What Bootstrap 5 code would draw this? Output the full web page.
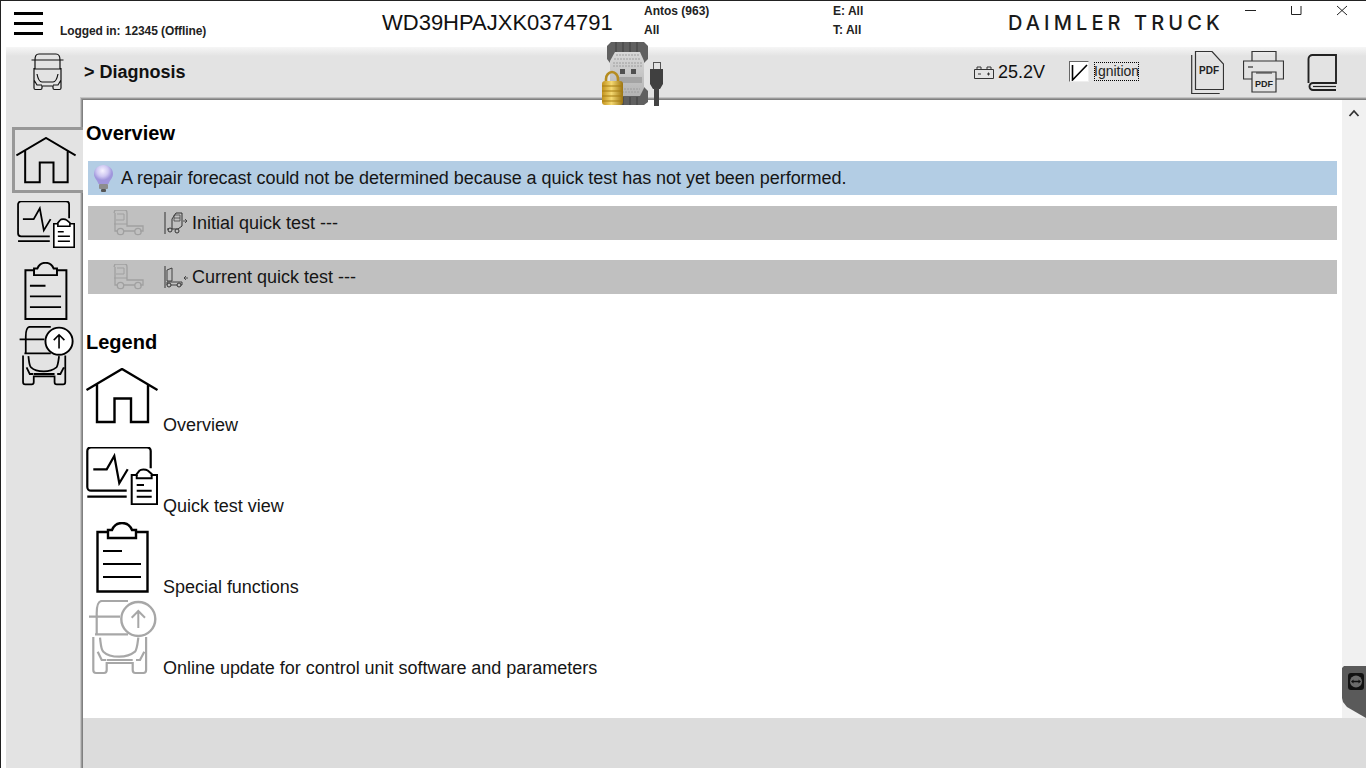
<!DOCTYPE html>
<html lang="en">
<head>
<meta charset="utf-8">
<link href="https://cdn.jsdelivr.net/npm/bootstrap@5.3.0/dist/css/bootstrap.min.css" rel="stylesheet">
<style>
html,body{height:100%;overflow:hidden}
body{font-family:"Liberation Sans",Arial,sans-serif;color:#000;background:#fff}
.win{height:768px;border-top:1px solid #222;border-left:1px solid #222}
.hdr{height:46px;flex:none}
.burger{width:29px;margin:11px 0 0 13px;height:23px;border-top:3px solid #000;border-bottom:3px solid #000;position:relative;flex:none}
.burger::after{content:"";position:absolute;left:0;right:0;top:7px;height:3px;background:#000}
.login{margin:21px 0 0 17px;width:322px;font-size:12px;font-weight:700;color:#222;flex:none;letter-spacing:-.08px}
.login span{margin-left:1px}
.vin{width:262px;font-size:22px;line-height:1;margin-top:11px;color:#111;flex:none}
.info{font-size:12px;font-weight:700;line-height:19px;margin-top:1px;color:#222;flex:none}
.info1{width:189px}
.info2{width:175px}
.brand{width:219px;flex:none;font-family:Inter,"Liberation Sans",sans-serif;font-size:20px;font-weight:500;letter-spacing:4.1px;white-space:nowrap;color:#1a1a1a;margin-top:10px;line-height:24px}
.wctl{padding-right:1px;flex:none}
.wbtn{width:46px;height:16px;display:flex;justify-content:center}
.stage{background:#e3e3e3;margin-left:5px;flex:1;min-height:0}
.tbar{height:50px;background:linear-gradient(#f6f6f6,#e3e3e3 9px);flex:none}
.truck{margin-left:25px;flex:none}
.crumbs{font-size:18px;font-weight:700;margin-left:20px;width:580px;color:#111;flex:none}
.bat{font-size:18px;color:#111;margin-left:310px;width:95px;flex:none;gap:4px}
.ign{font-size:14px;color:#222;width:122px;flex:none;margin-bottom:2px}
.ignbox{width:20px;height:21px;background:#fff;border:1px solid #eee;border-top-color:#666;border-left-color:#666;margin-right:5px}
.ignlab{outline:1px dotted #000;outline-offset:-1px;line-height:19px;width:45px}
.pr{margin-left:19px}
.bk{margin-left:23px}
.side{width:74px;flex:none;padding-top:30px;position:relative;z-index:2}
.tab-on{height:66px;width:71px;margin-left:6px;background:#e3e3e3;border:3px solid #989898;border-right:0;display:flex;align-items:center;padding-left:1px}
.s1{display:block;margin:8px 0 0 11px}
.s2{display:block;margin:14px 0 0 10px}
.s3{display:block;margin:5px 0 0 11px}
.rcol{min-width:0;margin:3px 0 0 3px;box-shadow:0 0 0 1px #808080,0 0 0 2px #9a9a9a,0 0 0 3px #c4c4c4}
.pane{flex:1;min-height:0;background:#fff}
.cont{padding:0 5px 0 3px;min-width:0}
.ttl{font-size:20px;font-weight:700;line-height:24px;margin:21px 0 0;color:#000}
.rowline{margin:16px 0 0 2px;height:34px;display:flex;align-items:center;font-size:18px;color:#151515;white-space:nowrap}
.tip{background:#b3cde4;letter-spacing:-.033px}
.grey1{background:#c0c0c0;margin-top:11px}
.grey2{background:#c0c0c0;margin-top:20px}
.ttl2{margin-top:36px}
.legs{margin-top:6px}
.leg{height:81px;display:flex;font-size:18px;color:#151515;letter-spacing:-.02px}
.leg svg{flex:none;margin-right:5px}
.leg span{line-height:21px;align-self:flex-end;margin-bottom:5px}
.m8{margin-top:8px}
.m6{margin-top:6px}
.mn3{margin-top:-3px}
.sb{width:24px;flex:none;background:#f1f1f1;display:flex;justify-content:center;padding-top:9px}
.foot{height:50px;flex:none;background:#dcdcdc;position:relative}
.device{position:absolute;left:600px;top:40px}
.tv{position:absolute;right:0;top:665px;width:24px;height:52px;background:#5a5a5a;clip-path:polygon(2px 0,100% 0,100% 100%,5px 41px,1px 36px,0 32px,0 2px);padding:7px 0 0 6px}
.bulb{margin:0 8px 0 6px;flex:none}
.t1{margin-left:25px;flex:none}
.t2{margin:0 4px 0 19px;flex:none}
</style>
</head>
<body>
<div class="win d-flex flex-column position-relative">
  <div class="hdr d-flex">
    <div class="burger"></div>
    <div class="login">Logged in: <span>12345 (Offline)</span></div>
    <div class="vin">WD39HPAJXK0374791</div>
    <div class="info info1"><div>Antos (963)</div><div>All</div></div>
    <div class="info info2"><div>E: All</div><div>T: All</div></div>
    <div class="brand">DAIMLER TRUCK</div>
    <div class="wctl d-flex">
      <div class="wbtn"><svg width="12" height="16"><path d="M1 9.500h11" stroke="#222" fill="none"/></svg></div>
      <div class="wbtn"><svg width="12" height="16"><path d="M1.500 5v8.500h9.500V5" stroke="#222" fill="none"/></svg></div>
      <div class="wbtn"><svg width="12" height="16"><path d="M1 5l10 9M11 5L1 14" stroke="#222" fill="none"/></svg></div>
    </div>
  </div>
  <div class="stage d-flex flex-column">
    <div class="tbar d-flex align-items-center">
      <svg class="truck" width="33" height="38" viewBox="0 0 33 38"><path d="M.5 7h32M4 7c0-4 1-6 4-6h17c3 0 4 2 4 6v9H4zM3 15v20c0 1 .5 1.500 1.500 1.500h5c1 0 1.500-.5 1.500-1.500v-2h11v2c0 1 .5 1.500 1.500 1.500h5c1 0 1.500-.5 1.500-1.500V15M6 21c1 5 3 8 5 8h11c2 0 4-3 5-8M3 27l3 5h5M30 27l-3 5h-5" fill="none" stroke="#111" stroke-width="1.200"/></svg>
      <div class="crumbs">&gt; Diagnosis</div>
      <div class="bat d-flex align-items-center">
        <svg width="20" height="13" viewBox="0 0 20 13"><path d="M3 3V1h4v2M13 3V1h4v2M.500 3.500h19v9H.500z" fill="none" stroke="#333"/><path d="M4 8h3M13 8h3M14.500 6.500v3" stroke="#333"/></svg>
        <span>25.2V</span>
      </div>
      <div class="ign d-flex align-items-center">
        <div class="ignbox"><svg class="d-block" width="18" height="19"><path d="M2.500 3v15L17 3" stroke="#000" stroke-width="1.600" fill="none"/></svg></div>
        <span class="ignlab">Ignition</span>
      </div>
      <svg width="33" height="43" viewBox="0 0 33 43"><path d="M4.500.5H21L32.500 13v25.500h-28zM.7 4v38.500h28" fill="none" stroke="#333" stroke-width="1.200"/><text x="18" y="23" text-anchor="middle" font-family="Liberation Sans" font-weight="700" font-size="10" fill="#222">PDF</text></svg>
      <svg class="pr" width="41" height="42" viewBox="0 0 41 42"><path d="M9 10V.5h24V10M9 28H.5V10h40v18H33" fill="none" stroke="#333" stroke-width="1.200"/><path d="M9 41V21h24v20z" fill="#e3e3e3" stroke="#333" stroke-width="1.200"/><path d="M13 22h16" stroke="#333"/><path d="M5 16h5" stroke="#777" stroke-width="2"/><text x="21" y="36" text-anchor="middle" font-family="Liberation Sans" font-weight="700" font-size="9" fill="#222">PDF</text></svg>
      <svg class="bk" width="30" height="37" viewBox="0 0 30 37"><path d="M1.500 29V5a4 4 0 0 1 4-4H29v28H6a3.500 3.500 0 0 0 0 7h23" fill="none" stroke="#222" stroke-width="1.900"/><path d="M6 32.500h23" stroke="#222" stroke-width="1.200"/></svg>
    </div>
    <div class="d-flex flex-grow-1 overflow-hidden">
      <div class="side">
        <div class="tab-on"><svg width="60" height="47" viewBox="0 0 72 56"><use href="#i-home"/></svg></div>
        <svg class="s1" width="58" height="47" viewBox="0 0 72 58"><use href="#i-quick"/></svg>
        <svg class="s2" width="59" height="59" viewBox="0 0 72 72"><use href="#i-clip"/></svg>
        <svg class="s3" width="58" height="60" viewBox="0 0 72 75"><use href="#i-update"/></svg>
      </div>
      <div class="rcol d-flex flex-column flex-grow-1">
        <div class="pane d-flex">
          <div class="cont flex-grow-1">
            <div class="ttl">Overview</div>
            <div class="rowline tip"><svg class="bulb" width="19" height="27" viewBox="0 0 19 27"><defs><radialGradient id="bulbg" cx=".45" cy=".3"><stop offset="0" stop-color="#f6f3ff"/><stop offset=".6" stop-color="#cfc8f2"/><stop offset="1" stop-color="#a096dc"/></radialGradient></defs><path d="M9.500 0C14.500 0 19 3.500 19 9c0 4-3.500 6.500-4.500 10h-10C3.500 15.500 0 13 0 9 0 3.500 4.500 0 9.500 0z" fill="url(#bulbg)"/><rect x="5" y="19" width="9" height="5" rx="1" fill="#8d8d8d"/><rect x="7" y="24" width="5" height="3" rx="1" fill="#555"/></svg><span>A repair forecast could not be determined because a quick test has not yet been performed.</span></div>
            <div class="rowline grey1"><svg class="t1" width="32" height="26" viewBox="0 0 32 26"><use href="#i-tr-side"/></svg><svg class="t2" width="24" height="24" viewBox="0 0 24 24"><path d="M1 1v22" stroke="#333"/><path d="M3 18h2M8 18h6l4-3V2h-6L8 8z" fill="none" stroke="#333"/><path d="M10 4h6v6h-6zM10 7h6" fill="none" stroke="#444" stroke-width=".8"/><circle cx="6" cy="19" r="2" fill="none" stroke="#333"/><circle cx="13" cy="20" r="2" fill="#c0c0c0" stroke="#333"/><path d="M19 10h4m-2-2l2 2-2 2" fill="none" stroke="#333" stroke-width=".8"/></svg><span>Initial quick test ---</span></div>
            <div class="rowline grey2"><svg class="t1" width="32" height="26" viewBox="0 0 32 26"><use href="#i-tr-side"/></svg><svg class="t2" width="24" height="24" viewBox="0 0 24 24"><path d="M1 1v22" stroke="#333"/><path d="M3 5l5-2v13M3 5v11h5M3 17h15v3H3z" fill="none" stroke="#333" stroke-width=".9"/><circle cx="5" cy="20" r="2" fill="#c0c0c0" stroke="#333"/><circle cx="15" cy="20" r="2" fill="#c0c0c0" stroke="#333"/><path d="M24 13h-4m2-2l-2 2 2 2" fill="none" stroke="#333" stroke-width=".8"/></svg><span>Current quick test ---</span></div>
            <div class="ttl ttl2">Legend</div>
            <div class="legs">
              <div class="leg"><svg class="m8" width="72" height="56" viewBox="0 0 72 56"><use href="#i-home"/></svg><span>Overview</span></div>
              <div class="leg"><svg class="m6" width="72" height="58" viewBox="0 0 72 58"><use href="#i-quick"/></svg><span>Quick test view</span></div>
              <div class="leg"><svg width="72" height="72" viewBox="0 0 72 72"><use href="#i-clip"/></svg><span>Special functions</span></div>
              <div class="leg"><svg class="mn3" width="72" height="75" viewBox="0 0 72 75"><g opacity=".34"><use href="#i-update"/></g></svg><span>Online update for control unit software and parameters</span></div>
            </div>
          </div>
          <div class="sb"><svg width="12" height="8"><path d="M1.500 7L6 2l4.500 5" fill="none" stroke="#333" stroke-width="1.800"/></svg></div>
        </div>
        <div class="foot"></div>
      </div>
    </div>
  </div>
  <svg class="device" width="66" height="66" viewBox="0 0 66 66">
    <defs>
      <linearGradient id="lk" x1="0" x2="1"><stop offset="0" stop-color="#c2921c"/><stop offset=".45" stop-color="#f4d870"/><stop offset="1" stop-color="#9c7410"/></linearGradient>
      <linearGradient id="panel" x1="0" y1="0" x2="0" y2="1"><stop offset="0" stop-color="#d8d8d8"/><stop offset=".55" stop-color="#c4c4c4"/><stop offset="1" stop-color="#b4b4b4"/></linearGradient>
    </defs>
    <path d="M6 5l4-4h28l5 0 4 4v13l-4 4v24l4 4v11l-4 3H10l-4-3V50l3-4V22l-3-4z" fill="#606060"/>
    <path d="M15 1v10M22 1v10M29 1v10M36 1v10M15 56v8M22 56v8M29 56v8M36 56v8" stroke="#4a4a4a" stroke-width="1.500"/>
    <path d="M14 11h25l4 9v27l-4 8H14l-5-8V20z" fill="url(#panel)"/>
    <path d="M15 14h23M13 18h27M12 22h29M12 25h29M14 48h25M15 51h23" stroke="#9e9e9e" stroke-dasharray="2 1"/>
    <rect x="19" y="28" width="5" height="5" fill="#4f4f4f"/><rect x="30" y="28" width="5" height="5" fill="#4f4f4f"/>
    <rect x="17" y="36" width="24" height="6" fill="#a4a4a4"/>
    <path d="M5 41v-3a6 7 0 0 1 12 0v3" fill="none" stroke="#b58c20" stroke-width="2.600"/>
    <rect x="1" y="40" width="21" height="24" rx="3" fill="url(#lk)"/>
    <path d="M1 45h21M1 50h21M1 55h21M1 60h21" stroke="#a67c12"/>
    <rect x="52.500" y="21.500" width="7" height="7" fill="none" stroke="#555"/>
    <path d="M49 28h13v15l-3 5h-7l-3-5z" fill="#404040"/><rect x="53" y="47" width="5" height="18" fill="#444"/>
  </svg>
  <div class="tv"><svg class="d-block" width="16" height="17" viewBox="0 0 16 17"><rect width="16" height="17" rx="3" fill="#111"/><circle cx="8" cy="8.500" r="6" fill="#6b6b6b"/><path d="M3 8.500L5.500 6.500v1.300h5V6.500L13 8.500l-2.500 2V9.200h-5v1.300z" fill="#111"/></svg></div>
</div>
<svg width="0" height="0" class="position-absolute">
  <defs>
    <g id="i-home"><path d="M.5 22L36 1l35.500 21M11 16v38h17.500V30.500h16.500V54H62V16" fill="none" stroke="#000" stroke-width="2.400"/></g>
    <g id="i-quick"><path d="M40.700 43.700H5a3.700 3.700 0 0 1-3.700-3.700V4A3.700 3.700 0 0 1 5 .3h56a3.700 3.700 0 0 1 3.700 3.700v17.300M1.300 49.700h39.400M7.300 22.300h13.400L28.300 9l5 27.300 8.400-14" fill="none" stroke="#000" stroke-width="2.200"/><path d="M45.700 28h5v-1l3-3.500c1-1.500 6-1.500 8 0l4 3.500v1H71v29.300H45.700z" fill="#fff" stroke="#000" stroke-width="2"/><path d="M50.700 28v3.300h15V28M50.700 38H58M50.700 43.700h15M50.700 49.700h15" fill="none" stroke="#000" stroke-width="1.900"/></g>
    <g id="i-clip"><path d="M22 10H11.500v59.500h50V10H50" fill="none" stroke="#000" stroke-width="2.400"/><path d="M22 16V8h4c2-5 6-7 10-7s8 2 10 7h4v8z" fill="none" stroke="#000" stroke-width="2.400"/><path d="M17 29h19M17 42h38M17 55h38" fill="none" stroke="#000" stroke-width="2.200"/></g>
    <g id="i-update"><path d="M10.700 34V13.300c0-8 2-12.300 5-12.300H42M3 16.700h31M9 34.300h33M7.300 37v33c0 2 1 3 2.700 3h8c1.700 0 2.700-1 2.700-3v-7h26v7c0 2 1 3 2.700 3h8c1.700 0 2.700-1 2.700-3V37M14 37.700c1 8 1 12 3.300 14 3 3 10 5 16 5s12-2 15.700-5c2-2 2.300-6 3.300-14M11.700 51.700l4 8.300H20M58.300 51.700L54 60h-4M20.700 60h26" fill="none" stroke="#000" stroke-width="2.200"/><circle cx="52.300" cy="19" r="17" fill="#fff" stroke="#000" stroke-width="2.400"/><path d="M52.300 28V11M45.700 17.700l6.600-6.700 6.700 6.700" fill="none" stroke="#000" stroke-width="2"/></g>
    <g id="i-tr-side" opacity=".22"><g transform="translate(-1 0)"><path d="M2 3l1-3h10c1 0 2 1 2 3v13h16v5h-3M3 3v18h2M12 21h11" fill="none" stroke="#333" stroke-width="1.300"/><path d="M5 4h7v6H4M15 14H2" fill="none" stroke="#333" stroke-width="1"/><circle cx="8.500" cy="21.500" r="3.200" fill="none" stroke="#333" stroke-width="1.300"/><circle cx="26" cy="21.500" r="3.200" fill="none" stroke="#333" stroke-width="1.300"/></g></g>
  </defs>
</svg>
<script src="https://cdn.jsdelivr.net/npm/bootstrap@5.3.0/dist/js/bootstrap.bundle.min.js"></script>
</body>
</html>
